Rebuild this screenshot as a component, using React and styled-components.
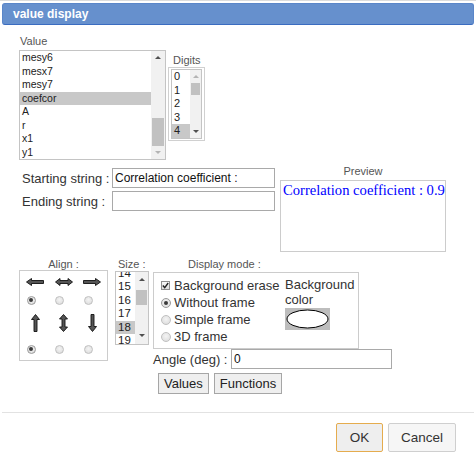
import React from 'react';
import styled, { createGlobalStyle } from 'styled-components';

const GlobalStyle = createGlobalStyle`
    body {
        margin: 0;
        background: #fff;
        font-family: 'Liberation Sans', Arial, sans-serif;
        color: #333;
    }
`;

const Dialog = styled.div`
    width: 476px;
    height: 463px;
    box-sizing: border-box;
    border-top: 1px solid #dcdcdc;
    display: flex;
    flex-direction: column;
`;

const TitleBar = styled.div`
    margin: 2px 2px 0;
    height: 22px;
    box-sizing: border-box;
    background: #6690cd;
    border: 1px solid #5a86c9;
    border-bottom-color: #3a6cc0;
    border-radius: 3px;
    color: #fff;
    font-weight: bold;
    font-size: 12px;
    line-height: 20px;
    padding-left: 10px;
`;

const Body = styled.div`
    padding: 10px 0 0 19px;
`;

const SmallLabel = styled.div`
    font-size: 11px;
    line-height: ${(p) => p.$lh || 13}px;
    color: #555;
    padding-left: ${(p) => p.$indent || 0}px;
    text-align: ${(p) => (p.$center ? 'center' : 'left')};
    margin-bottom: ${(p) => p.$gap || 0}px;
`;

const TopRow = styled.div`
    display: flex;
    align-items: flex-start;
`;

const ValueCol = styled.div`
    display: flex;
    flex-direction: column;
    gap: 2px;
`;

const DigitsCol = styled.div`
    margin: 19px 0 0 2px;
    display: flex;
    flex-direction: column;
`;

const DigitsFrame = styled.div`
    border: 1px solid #d0d0d0;
    padding: 1px 2px;
`;

const ListBox = styled.div`
    width: ${(p) => p.$w}px;
    height: ${(p) => p.$h}px;
    box-sizing: border-box;
    border: 1px solid #c4c4c4;
    background: #fff;
    display: flex;
    overflow: hidden;
`;

const Items = styled.div`
    flex: 1;
    overflow: hidden;
`;

const ItemsInner = styled.div`
    margin-top: ${(p) => p.$offset || 0}px;
`;

const Item = styled.div`
    font-size: ${(p) => p.$size}px;
    line-height: 13.5px;
    height: 13.5px;
    padding-left: ${(p) => p.$pad}px;
    white-space: nowrap;
    color: #222;
    background: ${(p) => (p.$selected ? '#c8c8c8' : 'transparent')};
`;

const Scrollbar = styled.div`
    width: ${(p) => p.$w}px;
    background: #f1f1f1;
    display: flex;
    flex-direction: column;
`;

const ArrowBtn = styled.div`
    height: ${(p) => p.$h}px;
    display: flex;
    align-items: center;
    justify-content: center;

    &::after {
        content: '';
        border-left: 3px solid transparent;
        border-right: 3px solid transparent;
        ${(p) => (p.$down ? 'border-top' : 'border-bottom')}: 3px solid ${(p) => (p.$dim ? '#b4b4b4' : '#505050')};
    }
`;

const Track = styled.div`
    flex: 1;
`;

const Thumb = styled.div`
    margin: ${(p) => p.$top}px 1px 0;
    height: ${(p) => p.$h}px;
    background: #c1c1c1;
`;

const StringRow = styled.div`
    margin-top: 5px;
    display: flex;
    align-items: flex-start;
`;

const StringFields = styled.div`
    padding: 3px 0 0 3px;
    display: grid;
    grid-template-columns: 90px 163px;
    row-gap: 3px;
`;

const FieldLabel = styled.label`
    font-size: 13px;
    color: #333;
    align-self: center;
    white-space: nowrap;
`;

const TextInput = styled.input`
    width: ${(p) => p.$w || 163}px;
    height: 20px;
    box-sizing: border-box;
    border: 1px solid #a9a9a9;
    padding: 0 2px;
    margin: 0;
    font-family: 'Liberation Sans', Arial, sans-serif;
    font-size: 12px;
    color: #111;
    outline: none;
`;

const PreviewCol = styled.div`
    margin-left: 5px;
    width: 166px;
`;

const PreviewBox = styled.div`
    height: 72px;
    box-sizing: border-box;
    border: 1px solid #ccc;
    padding: 1px 2px;
    font-family: 'Liberation Serif', 'Times New Roman', serif;
    font-size: 14.6px;
    color: #0000ff;
    white-space: nowrap;
    overflow: hidden;
`;

const BottomRow = styled.div`
    margin-top: 7px;
    display: flex;
    align-items: flex-start;
`;

const AlignCol = styled.div`
    width: 89px;
`;

const AlignBox = styled.div`
    height: 91px;
    box-sizing: border-box;
    border: 1px solid #ccc;
    padding-top: 1px;
    display: grid;
    grid-template-columns: repeat(3, 28.5px);
    grid-template-rows: 20px 16px 30px 22px;
    align-items: center;
`;

const AlignCell = styled.div`
    width: ${(p) => p.$w}px;
    display: flex;
    justify-content: center;
`;

const Radio = styled.span`
    width: ${(p) => p.$size || 9}px;
    height: ${(p) => p.$size || 9}px;
    box-sizing: border-box;
    border-radius: 50%;
    border: 1px solid ${(p) => (p.$checked ? '#9a9a9a' : '#c0c0c0')};
    background: radial-gradient(circle at 50% 40%, #f4f4f4, #d9d9d9);
    display: inline-flex;
    align-items: center;
    justify-content: center;
    flex-shrink: 0;

    &::after {
        content: '';
        width: 4px;
        height: 4px;
        border-radius: 50%;
        background: ${(p) => (p.$checked ? '#3a3a3a' : 'transparent')};
    }
`;

const CheckBox = styled.span`
    width: 9px;
    height: 9px;
    box-sizing: border-box;
    border: 1px solid #8f8f8f;
    background: linear-gradient(#fafafa, #dcdcdc);
    display: inline-flex;
    align-items: center;
    justify-content: center;
    flex-shrink: 0;
`;

const SizeCol = styled.div`
    margin-left: 7px;
`;

const ModeCol = styled.div`
    margin-left: 4px;
    display: flex;
    flex-direction: column;
`;

const ModeBox = styled.div`
    width: 206px;
    height: 77px;
    box-sizing: border-box;
    border: 1px solid #ccc;
    padding: 4px 0 0 7px;
    display: flex;
`;

const ModeOptions = styled.div`
    width: 124px;
    display: flex;
    flex-direction: column;
`;

const OptionRow = styled.div`
    height: 17px;
    display: flex;
    align-items: center;
    gap: ${(p) => p.$gap || 3}px;
    font-size: 13px;
    color: #333;
    white-space: nowrap;
`;

const BgColorCol = styled.div`
    font-size: 13px;
    line-height: 15px;
    color: #333;
`;

const Swatch = styled.div`
    margin-top: 1px;
    width: 45px;
    height: 22px;
    background: #bdbdbd;
    display: flex;
    align-items: center;
    justify-content: center;
`;

const AngleRow = styled.div`
    display: flex;
    align-items: center;
`;

const AngleLabel = styled.span`
    width: 78px;
    font-size: 13px;
    color: #333;
    white-space: nowrap;
`;

const ButtonRow = styled.div`
    margin-top: 4px;
    padding-left: 5px;
    display: flex;
    gap: 5px;
`;

const SmallButton = styled.button`
    height: 21px;
    margin: 0;
    padding: 0 5px;
    border: 1px solid #a6a6a6;
    border-radius: 0;
    background: #efefef;
    font-family: 'Liberation Sans', Arial, sans-serif;
    font-size: 13px;
    color: #222;
`;

const Separator = styled.div`
    margin: 18px 2px 0;
    height: 1px;
    background: #e2e2e2;
`;

const Footer = styled.div`
    padding: 10px 20px 0 0;
    display: flex;
    justify-content: flex-end;
    gap: 5px;
`;

const FooterButton = styled.button`
    width: ${(p) => p.$w}px;
    height: 29px;
    margin: 0;
    padding: 0;
    border: 1px solid ${(p) => (p.$primary ? '#e5ac4e' : '#cfcfcf')};
    border-radius: 2px;
    background: ${(p) => (p.$primary ? '#eeeeee' : '#f6f6f6')};
    font-family: 'Liberation Sans', Arial, sans-serif;
    font-size: 13.5px;
    color: #333;
`;

const ArrowIcon = ({ dir }) => {
    const paths = {
        left: 'M0.5,4 L5.5,0.5 L5.5,2.5 L17.5,2.5 L17.5,5.5 L5.5,5.5 L5.5,7.5 Z',
        both: 'M0.5,4 L5,0.5 L5,2.5 L13,2.5 L13,0.5 L17.5,4 L13,7.5 L13,5.5 L5,5.5 L5,7.5 Z',
        right: 'M17.5,4 L12.5,0.5 L12.5,2.5 L0.5,2.5 L0.5,5.5 L12.5,5.5 L12.5,7.5 Z',
        up: 'M4.5,0.5 L8.5,5.5 L6,5.5 L6,17.5 L3,17.5 L3,5.5 L0.5,5.5 Z',
        vboth: 'M4.5,0.5 L8.5,5 L6,5 L6,13 L8.5,13 L4.5,17.5 L0.5,13 L3,13 L3,5 L0.5,5 Z',
        down: 'M4.5,17.5 L8.5,12.5 L6,12.5 L6,0.5 L3,0.5 L3,12.5 L0.5,12.5 Z',
    };
    const vertical = dir === 'up' || dir === 'down' || dir === 'vboth';
    return (
        <svg width={vertical ? 9 : 18} height={vertical ? 18 : 8} viewBox={vertical ? '0 0 9 18' : '0 0 18 8'}>
            <path d={paths[dir]} fill="#555" stroke="#111" strokeWidth="0.9" strokeLinejoin="miter" />
        </svg>
    );
};

const valueItems = ['mesy6', 'mesx7', 'mesy7', 'coefcor', 'A', 'r', 'x1', 'y1'];
const digitItems = ['0', '1', '2', '3', '4'];
const sizeItems = ['14', '15', '16', '17', '18', '19'];

const App = () => {
    return (
        <>
            <GlobalStyle />
            <Dialog>
                <TitleBar>value display</TitleBar>
                <Body>
                    <TopRow>
                        <ValueCol>
                            <SmallLabel $indent={1}>Value</SmallLabel>
                            <ListBox $w={147} $h={110}>
                                <Items>
                                    {valueItems.map((item) => (
                                        <Item key={item} $size={10.5} $pad={2} $selected={item === 'coefcor'}>
                                            {item}
                                        </Item>
                                    ))}
                                </Items>
                                <Scrollbar $w={14}>
                                    <ArrowBtn $h={13} />
                                    <Track>
                                        <Thumb $top={54} $h={28} />
                                    </Track>
                                    <ArrowBtn $h={13} $down $dim />
                                </Scrollbar>
                            </ListBox>
                        </ValueCol>
                        <DigitsCol>
                            <SmallLabel $indent={5}>Digits</SmallLabel>
                            <DigitsFrame>
                                <ListBox $w={31} $h={69.5}>
                                    <Items>
                                        {digitItems.map((item) => (
                                            <Item key={item} $size={11} $pad={2} $selected={item === '4'}>
                                                {item}
                                            </Item>
                                        ))}
                                    </Items>
                                    <Scrollbar $w={11}>
                                        <ArrowBtn $h={12} $dim />
                                        <Track>
                                            <Thumb $top={1} $h={12} />
                                        </Track>
                                        <ArrowBtn $h={12} $down />
                                    </Scrollbar>
                                </ListBox>
                            </DigitsFrame>
                        </DigitsCol>
                    </TopRow>

                    <StringRow>
                        <StringFields>
                            <FieldLabel>Starting string :</FieldLabel>
                            <TextInput defaultValue="Correlation coefficient :" />
                            <FieldLabel>Ending string :</FieldLabel>
                            <TextInput defaultValue="" />
                        </StringFields>
                        <PreviewCol>
                            <SmallLabel $center $gap={2}>Preview</SmallLabel>
                            <PreviewBox>Correlation coefficient : 0.9</PreviewBox>
                        </PreviewCol>
                    </StringRow>

                    <BottomRow>
                        <AlignCol>
                            <SmallLabel $center $lh={11}>Align :</SmallLabel>
                            <AlignBox>
                                <AlignCell $w={30}><ArrowIcon dir="left" /></AlignCell>
                                <AlignCell $w={30}><ArrowIcon dir="both" /></AlignCell>
                                <AlignCell $w={30}><ArrowIcon dir="right" /></AlignCell>
                                <AlignCell $w={22}><Radio $checked /></AlignCell>
                                <AlignCell $w={22}><Radio /></AlignCell>
                                <AlignCell $w={22}><Radio /></AlignCell>
                                <AlignCell $w={30}><ArrowIcon dir="up" /></AlignCell>
                                <AlignCell $w={30}><ArrowIcon dir="vboth" /></AlignCell>
                                <AlignCell $w={30}><ArrowIcon dir="down" /></AlignCell>
                                <AlignCell $w={22}><Radio $checked /></AlignCell>
                                <AlignCell $w={22}><Radio /></AlignCell>
                                <AlignCell $w={22}><Radio /></AlignCell>
                            </AlignBox>
                        </AlignCol>

                        <SizeCol>
                            <SmallLabel $indent={3} $lh={11} $gap={1}>Size :</SmallLabel>
                            <ListBox $w={34} $h={74}>
                                <Items>
                                    <ItemsInner $offset={-5.5}>
                                        {sizeItems.map((item) => (
                                            <Item key={item} $size={11.5} $pad={2} $selected={item === '18'}>
                                                {item}
                                            </Item>
                                        ))}
                                    </ItemsInner>
                                </Items>
                                <Scrollbar $w={13}>
                                    <ArrowBtn $h={14} />
                                    <Track>
                                        <Thumb $top={4} $h={15} />
                                    </Track>
                                    <ArrowBtn $h={17} $down />
                                </Scrollbar>
                            </ListBox>
                        </SizeCol>

                        <ModeCol>
                            <SmallLabel $indent={35} $lh={11} $gap={2}>Display mode :</SmallLabel>
                            <ModeBox>
                                <ModeOptions>
                                    <OptionRow $gap={4}>
                                        <CheckBox>
                                            <svg width="7" height="7" viewBox="0 0 7 7">
                                                <path d="M0.8,3.6 L2.7,5.6 L6.2,1" fill="none" stroke="#222" strokeWidth="1.4" />
                                            </svg>
                                        </CheckBox>
                                        Background erase
                                    </OptionRow>
                                    <OptionRow>
                                        <Radio $size={10} $checked />
                                        Without frame
                                    </OptionRow>
                                    <OptionRow>
                                        <Radio $size={10} />
                                        Simple frame
                                    </OptionRow>
                                    <OptionRow>
                                        <Radio $size={10} />
                                        3D frame
                                    </OptionRow>
                                </ModeOptions>
                                <BgColorCol>
                                    Background
                                    <br />
                                    color
                                    <Swatch>
                                        <svg width="43" height="20" viewBox="0 0 43 20">
                                            <ellipse cx="21.5" cy="10" rx="20.5" ry="9" fill="#fff" stroke="#000" strokeWidth="1" />
                                        </svg>
                                    </Swatch>
                                </BgColorCol>
                            </ModeBox>
                            <AngleRow>
                                <AngleLabel>Angle (deg) :</AngleLabel>
                                <TextInput $w={161} defaultValue="0" />
                            </AngleRow>
                            <ButtonRow>
                                <SmallButton>Values</SmallButton>
                                <SmallButton>Functions</SmallButton>
                            </ButtonRow>
                        </ModeCol>
                    </BottomRow>
                </Body>
                <Separator />
                <Footer>
                    <FooterButton $primary $w={47}>OK</FooterButton>
                    <FooterButton $w={68}>Cancel</FooterButton>
                </Footer>
            </Dialog>
        </>
    );
};

export default App;
